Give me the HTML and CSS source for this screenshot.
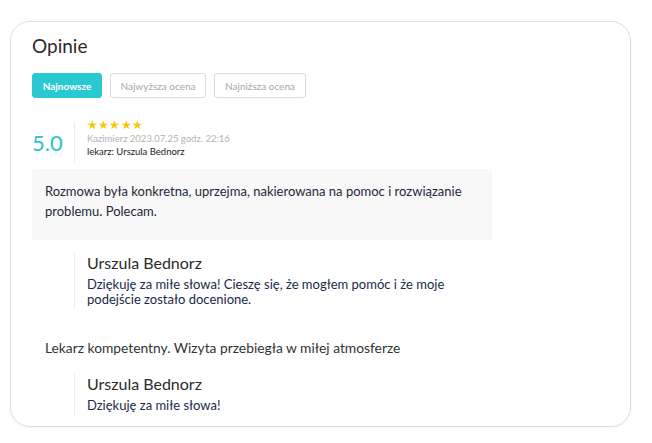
FILE: index.html
```html
<!DOCTYPE html>
<html lang="pl">
<head>
<meta charset="utf-8">
<link rel="stylesheet" href="styles.css">
</head>
<body>
<section class="card">
  <h2 class="title">Opinie</h2>
  <div class="tabs">
    <button class="tab active">Najnowsze</button>
    <button class="tab">Najwyższa ocena</button>
    <button class="tab">Najniższa ocena</button>
  </div>

  <div class="review-head">
    <div class="score">5.0</div>
    <div class="meta">
      <div class="stars">★★★★★</div>
      <div class="date">Kazimierz 2023.07.25 godz. 22:16</div>
      <div class="doctor">lekarz: Urszula Bednorz</div>
    </div>
  </div>

  <div class="review-body boxed">
    Rozmowa była konkretna, uprzejma, nakierowana na pomoc i rozwiązanie problemu. Polecam.
  </div>

  <div class="reply">
    <div class="reply-name">Urszula Bednorz</div>
    <div class="reply-text">Dziękuję za miłe słowa! Cieszę się, że mogłem pomóc i że moje podejście zostało docenione.</div>
  </div>

  <div class="review-body plain">Lekarz kompetentny. Wizyta przebiegła w miłej atmosferze</div>

  <div class="reply reply-2">
    <div class="reply-name">Urszula Bednorz</div>
    <div class="reply-text">Dziękuję za miłe słowa!</div>
  </div>
</section>
</body>
</html>
```

FILE: styles.css
```css
* { box-sizing: border-box; }
html, body { margin: 0; padding: 0; background: #fff; }
body {
  font-family: Lato, "Noto Sans", sans-serif;
  width: 652px;
  height: 443px;
  overflow: hidden;
}
.card {
  margin: 21px 0 0 10px;
  width: 621px;
  height: 406px;
  border: 1px solid #dedede;
  border-radius: 20px;
  padding: 11px 21px 0 21px;
  box-shadow: 0 1px 2px rgba(0,0,0,0.05);
}
.title {
  margin: 0;
  font-size: 19px;
  font-weight: 400;
  color: #2b2b2b;
  line-height: 25px;
}
.tabs {
  display: flex;
  gap: 8px;
  margin-top: 15px;
}
.tab {
  font-family: Lato, sans-serif;
  font-size: 10px;
  height: 25px;
  padding: 0;
  border: 1px solid #dcdcdc;
  border-radius: 3px;
  background: #fff;
  color: #a8a8a8;
}
.tab:nth-child(2) { width: 96px; }
.tab:nth-child(3) { width: 92px; }
.tab.active {
  width: 70px;
  background: #2ac9d2;
  border-color: #2ac9d2;
  color: #fff;
  font-weight: 700;
}
.review-head {
  display: flex;
  align-items: center;
  margin-top: 24px;
  height: 40px;
}
.score {
  font-size: 22px;
  color: #2ac3cc;
  width: 42px;
  line-height: 22px;
  margin-top: 2px;
}
.meta {
  border-left: 1px solid #ececec;
  padding-left: 12px;
  height: 40px;
}
.stars {
  color: #f7c600;
  font-size: 11.5px;
  letter-spacing: 0.2px;
  line-height: 10px;
  margin-top: -2px;
}
.date {
  font-size: 9.5px;
  color: #b3b3b3;
  line-height: 13px;
  margin-top: 2px;
}
.doctor {
  font-size: 9.5px;
  color: #222;
  line-height: 13px;
}
.review-body {
  font-size: 13px;
  color: #1e2838;
}
.boxed {
  margin-top: 7px;
  width: 460px;
  background: #f8f8f8;
  border-radius: 3px;
  padding: 12px 13px 20px 13px;
  line-height: 20px;
  height: 71px;
}
.reply {
  margin: 13px 0 0 42px;
  border-left: 1px solid #ececec;
  padding: 0 0 2px 12px;
  width: 410px;
}
.reply-name {
  font-size: 16px;
  color: #2b2b2b;
  line-height: 20px;
}
.reply-text {
  font-size: 13px;
  color: #1a2a48;
  line-height: 15px;
  margin-top: 4px;
}
.plain {
  margin: 29px 0 0 13px;
  font-size: 13.8px;
  color: #333;
  line-height: 20px;
}
.reply-2 { margin-top: 16px; }
```
